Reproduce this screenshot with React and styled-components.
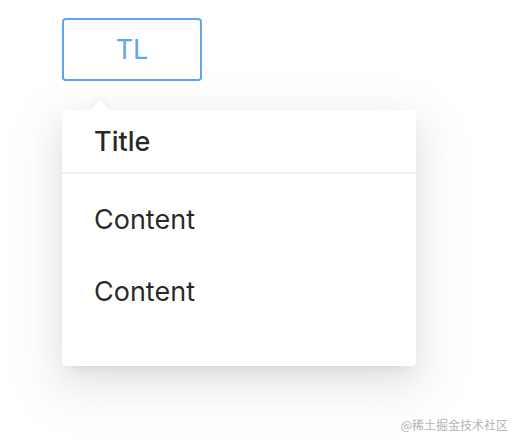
import React from "react";
import styled, { createGlobalStyle } from "styled-components";

const Global = createGlobalStyle`
  html, body { margin: 0; padding: 0; background: #fff; }
  body { font-family: Inter, "Noto Sans", "Liberation Sans", sans-serif; color: rgba(0,0,0,0.85); }
  #root { width: 518px; height: 444px; position: relative; overflow: hidden; }
`;

const Page = styled.div`
  display: flex;
  flex-direction: column;
  align-items: flex-start;
  padding: 18px 0 0 62px;
`;

const Button = styled.button`
  width: 140px;
  height: 63px;
  box-sizing: border-box;
  border: 2px solid #5fa5ef;
  border-radius: 4px;
  background: #fff;
  color: #5fa5ef;
  font-family: Inter, "Noto Sans", "Liberation Sans", sans-serif;
  font-size: 27px;
  padding: 0;
  display: flex;
  align-items: center;
  justify-content: center;
`;

const Popover = styled.div`
  position: relative;
  margin-top: 29px;
  width: 354px;
  background: #fff;
  border-radius: 4px;
  box-shadow: 0 6px 12px -8px rgba(0,0,0,0.12), 0 12px 32px 0 rgba(0,0,0,0.08), 0 18px 56px 16px rgba(0,0,0,0.05);
`;

const Arrow = styled.span`
  position: absolute;
  left: 31px;
  top: -7px;
  width: 14px;
  height: 14px;
  background: #fff;
  transform: rotate(45deg);
  box-shadow: -2px -2px 6px rgba(0,0,0,0.05);
`;

const Title = styled.div`
  position: relative;
  height: 62px;
  padding: 0 32px;
  display: flex;
  align-items: center;
  font-size: 27px;
  font-weight: 500;
  color: rgba(0,0,0,0.85);
  border-bottom: 2px solid #f0f0f0;
  background: #fff;
  border-radius: 4px 4px 0 0;
`;

const Body = styled.div`
  padding: 24px 32px 24px;
`;

const Line = styled.p`
  margin: 0 0 28px;
  font-size: 27px;
  line-height: 44px;
  color: rgba(0,0,0,0.85);
`;

const Watermark = styled.div`
  position: absolute;
  right: 10px;
  bottom: 11px;
  font-size: 12px;
  color: #b4b4b4;
  font-family: "Noto Sans CJK SC", sans-serif;
`;

export default function App() {
  return (
    <>
      <Global />
      <Page>
        <Button>TL</Button>
        <Popover>
          <Arrow />
          <Title>Title</Title>
          <Body>
            <Line>Content</Line>
            <Line>Content</Line>
          </Body>
        </Popover>
      </Page>
      <Watermark>@稀土掘金技术社区</Watermark>
    </>
  );
}
